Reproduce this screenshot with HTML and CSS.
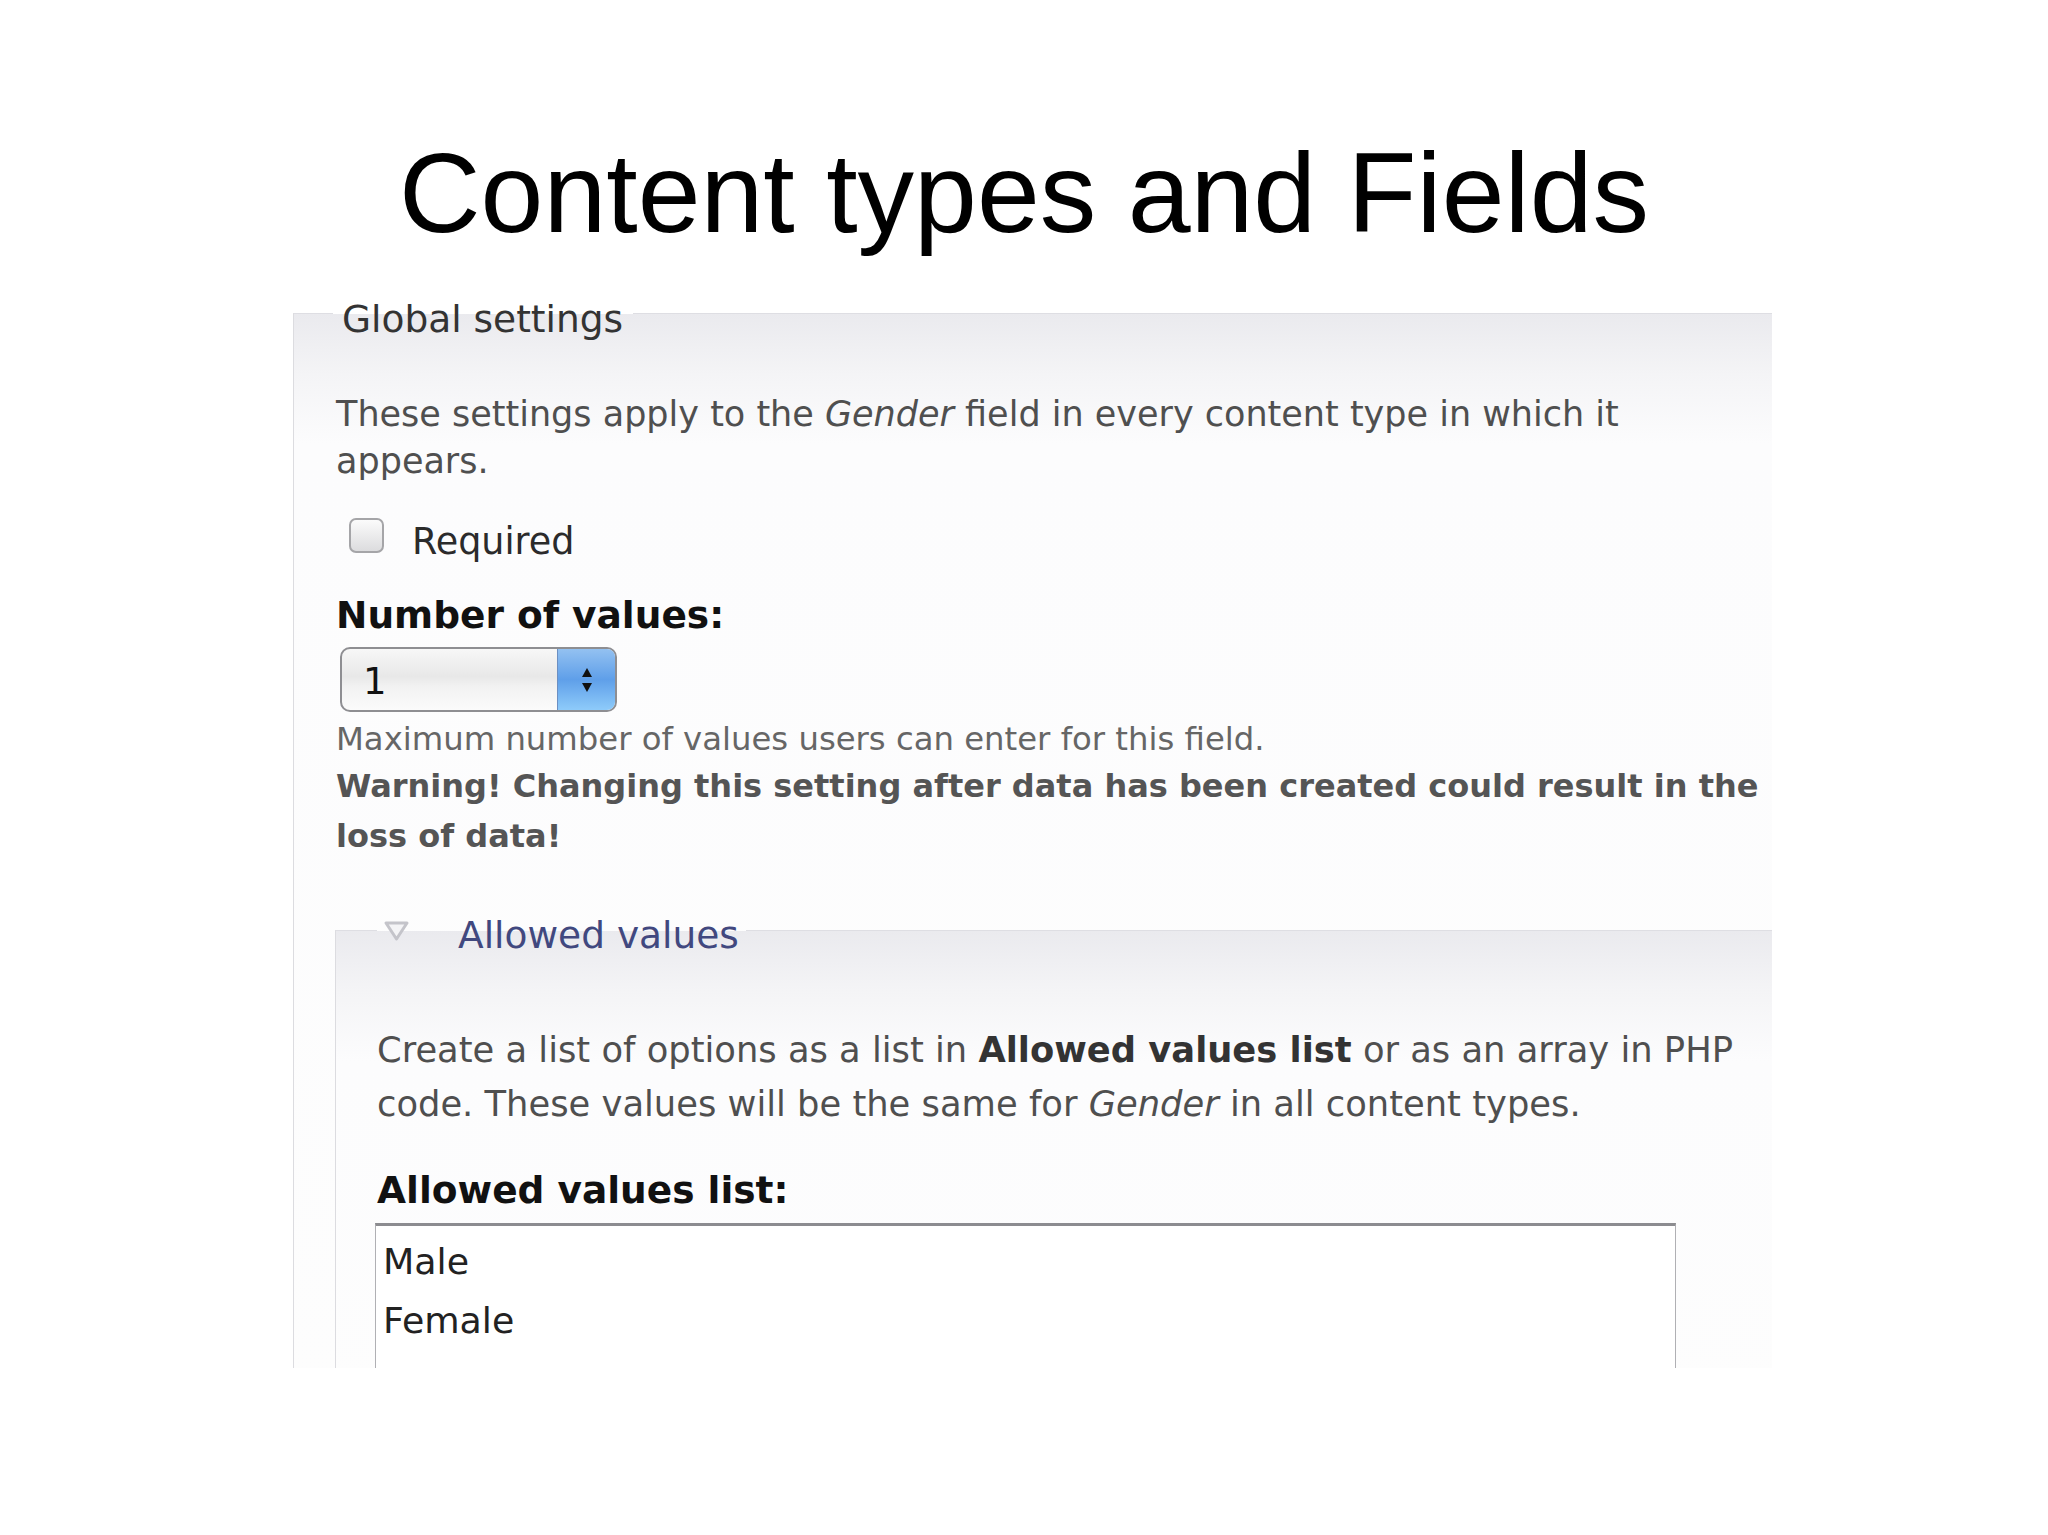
FILE: index.html
```html
<!DOCTYPE html>
<html lang="en">
<head>
    <meta charset="UTF-8">
    <meta name="viewport" content="width=device-width, initial-scale=1.0">
    <title>Content types and Fields</title>
    <link rel="stylesheet" href="styles.css">
</head>
<body>
    <h1 class="slide-title">Content types and Fields</h1>

    <!-- Screenshot of the field settings form -->
    <div class="shot">
        <fieldset class="group">
            <legend class="group-title">Global settings</legend>
            <p class="intro">These settings apply to the <em>Gender</em> field in every content type in which it<br>appears.</p>

            <label class="check-row"><span class="checkbox"></span><span>Required</span></label>

            <div class="field-label">Number of values:</div>
            <div class="select">
                <span class="select-value">1</span>
                <span class="select-btn">
                    <svg width="14" height="28" viewBox="0 0 14 28"><polygon points="7,2 12,11 2,11" fill="#111"/><polygon points="2,17 12,17 7,26" fill="#111"/></svg>
                </span>
            </div>
            <div class="help">Maximum number of values users can enter for this field.</div>
            <div class="warning">Warning! Changing this setting after data has been created could result in the<br>loss of data!</div>

            <fieldset class="group inner">
                <legend class="group-title link"><svg class="toggle" width="27" height="22" viewBox="0 0 27 22"><polygon points="3,3 24,3 13.5,19" fill="#f4f4f6" stroke="#c4c4ca" stroke-width="3" stroke-linejoin="round"/></svg>Allowed values</legend>
                <p class="intro inner-intro">Create a list of options as a list in <strong>Allowed values list</strong> or as an array in PHP<br>code. These values will be the same for <em>Gender</em> in all content types.</p>
                <div class="field-label">Allowed values list:</div>
                <div class="textarea">Male<br>Female</div>
            </fieldset>
        </fieldset>
    </div>
</body>
</html>
```

FILE: styles.css
```css
body {
    margin: 0;
    background: #fff;
    font-family: "DejaVu Sans", Verdana, sans-serif;
}
.slide-title {
    margin: 0;
    padding-top: 137px;
    font-family: "Liberation Sans", Arial, sans-serif;
    font-weight: normal;
    font-size: 113px;
    line-height: 113px;
    color: #000;
    text-align: center;
}
.shot {
    width: 1479px;
    height: 1082px;
    margin: 36px 0 0 293px;
    overflow: hidden;
}
.group {
    margin: 0;
    min-width: 0;
    padding: 50px 0 0 42px;
    border: 0;
    border-top: 1px solid #dedee3;
    border-left: 1px solid #dcdce0;
    background: linear-gradient(#eaeaee, #f4f4f6 60px, #fcfcfd 130px, #fdfdfd);
    box-sizing: border-box;
}
.group-title {
    margin-left: -3px;
    padding: 11px 10px 0 9px;
    font-size: 37.5px;
    line-height: 44px;
    color: #333;
}
.inner {
    margin: 43px 0 0 -1px;
    padding: 66px 0 0 41px;
}
.group-title.link {
    margin-left: 0;
    padding: 9px 7px 0 6px;
    color: #41487f;
}
.toggle {
    vertical-align: 6px;
    margin-right: 48px;
}
.intro {
    margin: 0;
    font-size: 35px;
    line-height: 47px;
    color: #4f4f4f;
    white-space: nowrap;
}
.inner-intro {
    font-size: 35.3px;
    line-height: 54px;
}
.intro strong {
    color: #333;
}
.check-row {
    display: flex;
    align-items: flex-start;
    margin: 35px 0 0 13px;
    font-size: 36.5px;
    line-height: 44px;
    color: #2b2b2b;
}
.checkbox {
    width: 35px;
    height: 35px;
    margin: -2px 28px 0 0;
    border: 2px solid #a5a5a8;
    border-radius: 7px;
    background: linear-gradient(#fbfbfb, #dcdcde);
    box-sizing: border-box;
}
.field-label {
    margin-top: 29px;
    font-weight: bold;
    font-size: 37.5px;
    line-height: 44px;
    color: #111;
}
.inner .field-label {
    margin-top: 37px;
}
.select {
    display: flex;
    width: 277px;
    height: 65px;
    margin: 10px 0 0 4px;
    border: 2px solid #8e8e92;
    border-radius: 10px;
    overflow: hidden;
    background: linear-gradient(#f7f7f7, #e8e8e8 45%, #f2f2f2 62%, #fbfbfb);
    box-sizing: border-box;
}
.select-value {
    flex: 1;
    padding: 4px 0 0 21px;
    font-size: 37px;
    line-height: 57px;
    color: #111;
}
.select-btn {
    display: flex;
    align-items: center;
    justify-content: center;
    width: 57px;
    border-left: 1px solid #6c8fc2;
    background: linear-gradient(#93c1f1, #5f9fe9 50%, #8ecbfa);
}
.help {
    margin-top: 7px;
    font-size: 32.3px;
    line-height: 40px;
    color: #666;
    white-space: nowrap;
}
.warning {
    margin-top: 2px;
    font-weight: bold;
    font-size: 32px;
    line-height: 50px;
    color: #555;
    white-space: nowrap;
}
.textarea {
    width: 1301px;
    height: 200px;
    margin: 11px 0 0 -2px;
    padding: 6px 0 0 7px;
    border: 1px solid #b0b0b4;
    border-top: 3px solid #8c8c90;
    background: #fff;
    font-size: 36.3px;
    line-height: 59px;
    color: #222;
    box-sizing: border-box;
}
```
